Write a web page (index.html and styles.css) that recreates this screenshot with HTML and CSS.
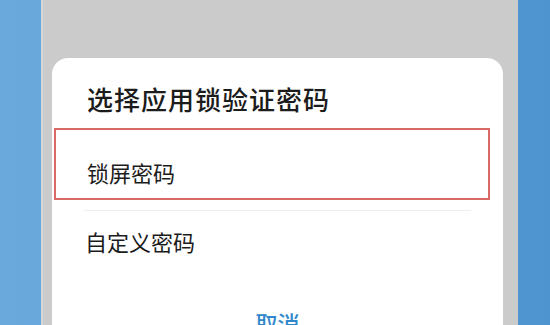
FILE: index.html
```html
<!DOCTYPE html>
<html lang="zh-CN">
<head>
  <meta charset="UTF-8" />
  <meta name="viewport" content="width=device-width, initial-scale=1.0"/>
  <title>应用锁</title>
  <link rel="stylesheet" href="styles.css">
</head>
<body>

  <div class="phone">
    <div class="sheet">
      <h2>选择应用锁验证密码</h2>
      <div class="option highlight">锁屏密码</div>
      <div class="divider"></div>
      <div class="option second">自定义密码</div>
      <button class="cancel">取消</button>
    </div>
  </div>

</body>
</html>
```

FILE: styles.css
```css
body {
  margin: 0;
  padding: 0;
  height: 325px;
  overflow: hidden;
  background: linear-gradient(to right, #6aa9dc, #4e95cf);
  font-family: "Noto Sans CJK SC", "Noto Sans", sans-serif;
  color: #1c1c1c;
}

.phone {
  margin-left: 41px;
  width: 477px;
  height: 325px;
  background-color: #cbcbcb;
  border-left: 2px solid #d6d6d6;
  padding: 58px 0 0 9px;
  box-sizing: border-box;
}

.sheet {
  width: 451px;
  height: 300px;
  background-color: white;
  border-radius: 16px 16px 0 0;
  padding-top: 26px;
  box-sizing: border-box;
}

.sheet h2 {
  margin: 0 0 14px 35px;
  font-size: 26px;
  font-weight: 500;
  letter-spacing: 1px;
  line-height: 30px;
}

.option {
  font-size: 22px;
  line-height: 26px;
  padding-left: 33px;
}

.highlight {
  margin: 0 13px 0 2px;
  border: 2px solid #d76a66;
  padding: 29px 0 13px 31px;
}

.divider {
  height: 1px;
  background-color: #f1eef1;
  margin: 10px 32px 0 32px;
}

.second {
  padding-top: 17px;
}

.cancel {
  display: block;
  margin: 55px auto 0;
  background: none;
  border: none;
  padding: 0;
  font-family: inherit;
  font-size: 22px;
  line-height: 26px;
  font-weight: 500;
  color: #2f87cc;
}
```
